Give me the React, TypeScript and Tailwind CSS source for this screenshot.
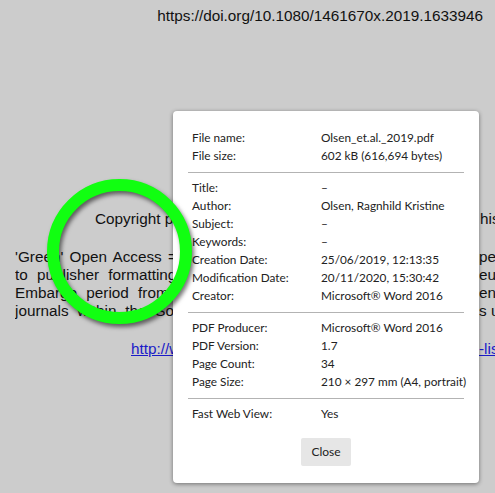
const sections: [string, string][][] = [
  [
    ["File name:", "Olsen_et.al._2019.pdf"],
    ["File size:", "602 kB (616,694 bytes)"],
  ],
  [
    ["Title:", "–"],
    ["Author:", "Olsen, Ragnhild Kristine"],
    ["Subject:", "–"],
    ["Keywords:", "–"],
    ["Creation Date:", "25/06/2019, 12:13:35"],
    ["Modification Date:", "20/11/2020, 15:30:42"],
    ["Creator:", "Microsoft® Word 2016"],
  ],
  [
    ["PDF Producer:", "Microsoft® Word 2016"],
    ["PDF Version:", "1.7"],
    ["Page Count:", "34"],
    ["Page Size:", "210 × 297 mm (A4, portrait)"],
  ],
  [["Fast Web View:", "Yes"]],
];

function PageLine({ left, right, spacing }: { left: string; right: string; spacing: string }) {
  return (
    <div className="flex h-[18px] items-center whitespace-nowrap">
      <div className={`w-[464px] shrink-0 overflow-hidden ${spacing}`}>{left}</div>
      <div className="shrink-0">{right}</div>
    </div>
  );
}

export default function App() {
  return (
    <div className="relative w-[495px] h-[493px] overflow-hidden bg-[#cccccc] text-[#111] font-['Liberation_Sans',Arial,sans-serif] text-[15.3px] leading-[18px]">
      {/* page behind the overlay */}
      <div className="pt-[7px] pr-[12px] text-right">https://doi.org/10.1080/1461670x.2019.1633946</div>

      <div className="mt-[185px] pl-[95px] flex h-[18px] items-center whitespace-nowrap">
        <div className="w-[385px] shrink-0 overflow-hidden">Copyright policies of this journal</div>
        <div className="shrink-0">his</div>
      </div>

      <div className="mt-[20px] pl-[15px]">
        <PageLine left="'Green' Open Access = author may share the accepted" right="pe" spacing="[word-spacing:2px]" />
        <PageLine left="to publisher formatting (preprint or postprint) in repository" right="eus" spacing="[word-spacing:5px]" />
        <PageLine left="Embargo period from publication for open access version" right="en" spacing="[word-spacing:5px]" />
        <PageLine left="journals within the Social Sciences and Humanities are" right="s u" spacing="[word-spacing:4.5px]" />
      </div>

      <div className="mt-[20px] pl-[131px] flex h-[18px] items-center whitespace-nowrap text-[#1a1ac8] underline">
        <div className="w-[348px] shrink-0 overflow-hidden">http://www.sherpa.ac.uk/romeo/search-list</div>
        <div className="shrink-0">-lis</div>
      </div>

      {/* document properties dialog */}
      <div className="absolute left-[173px] top-[111px] w-[306px] rounded-[4px] bg-white px-[15px] pt-[18px] pb-[17px] shadow-[0_1px_4px_rgba(0,0,0,0.45)] font-['Lato',sans-serif] text-[11.8px] text-[#222]">
        {sections.map((rows, i) => (
          <div key={i}>
            {i > 0 && <div className="mt-[7px] mb-[6px] h-px bg-[#b3b3b3]" />}
            {rows.map(([label, value]) => (
              <div key={label} className="flex h-[18px] items-center px-[4px] whitespace-nowrap">
                <div className="w-[129px] shrink-0">{label}</div>
                <div>{value}</div>
              </div>
            ))}
          </div>
        ))}
        <div className="mt-[15px] flex justify-center">
          <button className="h-[28px] w-[50px] rounded-[2px] bg-[#e6e6e6] text-[12px] text-[#222]">Close</button>
        </div>
      </div>

      {/* green highlight ring */}
      <div className="absolute left-[47px] top-[179px] h-[145px] w-[145px] rounded-full border-[12px] border-[#11ff11] [filter:drop-shadow(2px_3px_2px_rgba(0,0,0,0.55))]" />
    </div>
  );
}
